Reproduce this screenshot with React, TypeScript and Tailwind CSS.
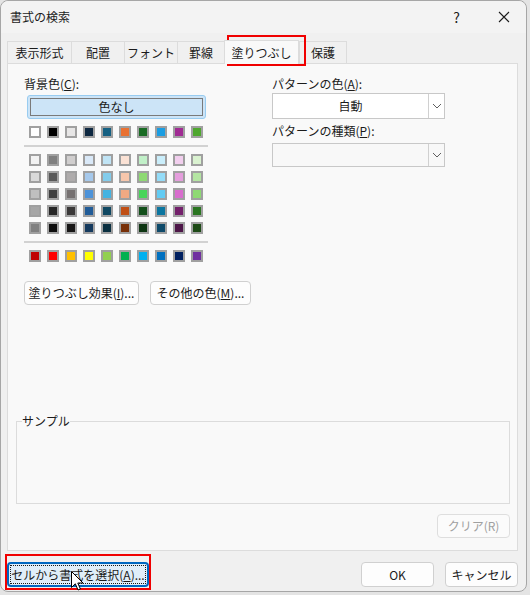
const THEME = ["#ffffff", "#000000", "#e7e6e6", "#0e2841", "#156082", "#e97132", "#196b24", "#1b9de2", "#a02b93", "#4ea72e"]

const TINTS = [
  ["#f2f2f2", "#7f7f7f", "#d0cece", "#dae9f8", "#c0e4f5", "#fbe2d5", "#c1f0c8", "#caeefb", "#f2cfee", "#daf2d0"],
  ["#d9d9d9", "#595959", "#aeabab", "#a6c9ec", "#83cceb", "#f7c7ac", "#8ed973", "#94dcf8", "#e59edd", "#b4e5a2"],
  ["#bfbfbf", "#404040", "#757070", "#4d93d9", "#44b3e1", "#f1a983", "#47d45a", "#61cbf3", "#d86dcd", "#8ed973"],
  ["#a6a6a6", "#262626", "#3a3838", "#215c98", "#0f4761", "#c04f15", "#124f1a", "#0b76a0", "#73206b", "#2a7521"],
  ["#808080", "#0d0d0d", "#171616", "#153a5e", "#0a2f40", "#783009", "#0d3512", "#0e4a6a", "#4d1648", "#1d4a16"],
]

const STANDARD = ["#c00000", "#ff0000", "#ffc000", "#ffff00", "#92d050", "#00b050", "#00b0f0", "#0070c0", "#002060", "#7030a0"]

const TABS = [
  { label: "表示形式", w: "w-[65px]" },
  { label: "配置", w: "w-[54px]" },
  { label: "フォント", w: "w-[54px]" },
  { label: "罫線", w: "w-[48px]" },
  { label: "塗りつぶし", w: "w-[75px]", active: true },
  { label: "保護", w: "w-[48px]" },
]

function Swatch({ color }: { color: string }) {
  return <div className="h-3 w-3 border-2 border-[#a0a0a0]" style={{ backgroundColor: color }} />
}

function SwatchRow({ colors }: { colors: string[] }) {
  return (
    <div className="flex gap-[6px] pl-[5px]">
      {colors.map((c, i) => (
        <Swatch key={i} color={c} />
      ))}
    </div>
  )
}

function Chevron() {
  return (
    <svg width="10" height="6" viewBox="0 0 10 6" fill="none">
      <path d="M1 1l4 4 4-4" stroke="#5f5f5f" strokeWidth="1" />
    </svg>
  )
}

function Dropdown({ value, filled }: { value?: string; filled?: boolean }) {
  return (
    <div
      className={`flex h-full w-[173px] border border-[#c8c8c8] ${filled ? "bg-white" : "bg-[#f8f8f8]"}`}
    >
      <div className="flex flex-1 items-center justify-center">{value}</div>
      <div className="flex w-[16px] items-center justify-center border-l border-[#d0d0d0]">
        <Chevron />
      </div>
    </div>
  )
}

function PushButton({ children, className = "" }: { children: React.ReactNode; className?: string }) {
  return (
    <div
      className={`flex shrink-0 items-center justify-center whitespace-nowrap rounded-[4px] border border-[#d0d0d0] bg-[#fdfdfd] ${className}`}
    >
      {children}
    </div>
  )
}

export default function App() {
  return (
    <div className="relative h-[595px] w-[530px] overflow-hidden bg-[#e4e4e4] font-['Noto_Sans_CJK_JP',sans-serif] text-[12px] leading-[16px] text-[#1b1b1b]">
      <div className="flex h-[592px] w-[527px] flex-col rounded-[8px] border border-[#a6a6a6] bg-[#f0f0f0]">
        {/* title bar */}
        <div className="flex h-[32px] items-center rounded-t-[8px] bg-[#f3f3f3] pl-[9px]">
          <span>書式の検索</span>
          <span className="ml-auto text-[14px]">?</span>
          <svg className="ml-[38px] mr-[16px]" width="12" height="12" viewBox="0 0 12 12">
            <path d="M1 1l10 10M11 1L1 11" stroke="#1b1b1b" strokeWidth="1.1" />
          </svg>
        </div>

        {/* tabs */}
        <div className="mt-[7px] flex h-[23px] items-end pl-[6px]">
          {TABS.map((t) =>
            t.active ? (
              <div
                key={t.label}
                className={`relative z-10 -mb-px flex h-[24px] items-center justify-center border-x border-t border-[#dcdcdc] bg-[#f9f9f9] ${t.w}`}
              >
                {t.label}
              </div>
            ) : (
              <div
                key={t.label}
                className={`-mr-px flex h-[22px] items-center justify-center border-x border-t border-[#dcdcdc] bg-[#f0f0f0] ${t.w}`}
              >
                {t.label}
              </div>
            )
          )}
        </div>

        {/* panel */}
        <div className="ml-[6px] flex h-[488px] w-[511px] flex-col border border-[#dcdcdc] bg-[#f9f9f9]">
          <div className="flex pl-[16px] pt-[12px]">
            <div className="flex w-[184px] shrink-0 flex-col">
              <div className="h-[16px]">
                背景色(<span className="underline">C</span>):
              </div>
              <div className="ml-[3px] mt-[3px] flex h-[24px] w-[179px] items-center justify-center rounded-[3px] border border-[#99ccf0] bg-[#cce4f7] p-[2px]">
                <div className="flex h-full w-full items-center justify-center border border-[#7a7a7a]">色なし</div>
              </div>
              <div className="mt-[7px]">
                <SwatchRow colors={THEME} />
              </div>
              <div className="mt-[7px] h-[2px] bg-[#d2d2d2]" />
              <div className="mt-[7px] flex flex-col gap-[5px]">
                {TINTS.map((row, i) => (
                  <SwatchRow key={i} colors={row} />
                ))}
              </div>
              <div className="mt-[7px] h-[2px] bg-[#d2d2d2]" />
              <div className="mt-[7px]">
                <SwatchRow colors={STANDARD} />
              </div>
              <div className="mt-[19px] flex gap-[11px]">
                <PushButton className="h-[24px] w-[115px]">
                  塗りつぶし効果(<span className="underline">I</span>)...
                </PushButton>
                <PushButton className="h-[24px] w-[101px]">
                  その他の色(<span className="underline">M</span>)...
                </PushButton>
              </div>
            </div>

            <div className="ml-[64px] flex flex-col">
              <div className="h-[16px]">
                パターンの色(<span className="underline">A</span>):
              </div>
              <div className="mt-[1px] h-[26px]">
                <Dropdown value="自動" filled />
              </div>
              <div className="mt-[4px] h-[16px]">
                パターンの種類(<span className="underline">P</span>):
              </div>
              <div className="mt-[4px] h-[24px]">
                <Dropdown />
              </div>
            </div>
          </div>

          <fieldset className="ml-[8px] mr-[7px] mt-[108px] h-[91px] border border-[#dcdcdc]">
            <legend className="ml-[5px] leading-[16px]">サンプル</legend>
          </fieldset>

          <div className="mr-[7px] mt-[10px] flex justify-end">
            <div className="flex h-[24px] w-[73px] items-center justify-center rounded-[4px] border border-[#dedede] bg-[#fbfbfb] text-[#a0a0a0]">
              クリア(R)
            </div>
          </div>
        </div>

        {/* bottom buttons */}
        <div className="mt-[11px] flex pl-[6px] pr-[8px]">
          <div className="flex h-[25px] w-[142px] items-center justify-center whitespace-nowrap rounded-[4px] border-2 border-[#0067c0] bg-[#e0eef9] p-[1px]">
            <div className="flex h-full w-full items-center justify-center border border-dotted border-[#1b1b1b]">
              セルから書式を選択(<span className="underline">A</span>)...
            </div>
          </div>
          <PushButton className="ml-auto h-[25px] w-[73px]">OK</PushButton>
          <PushButton className="ml-[11px] h-[25px] w-[73px]">キャンセル</PushButton>
        </div>
      </div>

      {/* highlight boxes */}
      <div className="absolute left-[227px] top-[35px] h-[31px] w-[79px] border-2 border-[#f00000]" />
      <div className="absolute left-[5px] top-[554px] h-[36px] w-[146px] border-2 border-[#f00000]" />

      {/* mouse pointer */}
      <svg className="absolute left-[71px] top-[571px]" width="14" height="22" viewBox="0 0 14 22">
        <path
          d="M0.5 0.5 L0.5 16.5 L4.3 12.8 L7 19 L9.4 18 L6.8 12 L12 12 Z"
          fill="#ffffff"
          stroke="#000000"
          strokeWidth="1"
          strokeLinejoin="round"
        />
      </svg>
    </div>
  )
}
